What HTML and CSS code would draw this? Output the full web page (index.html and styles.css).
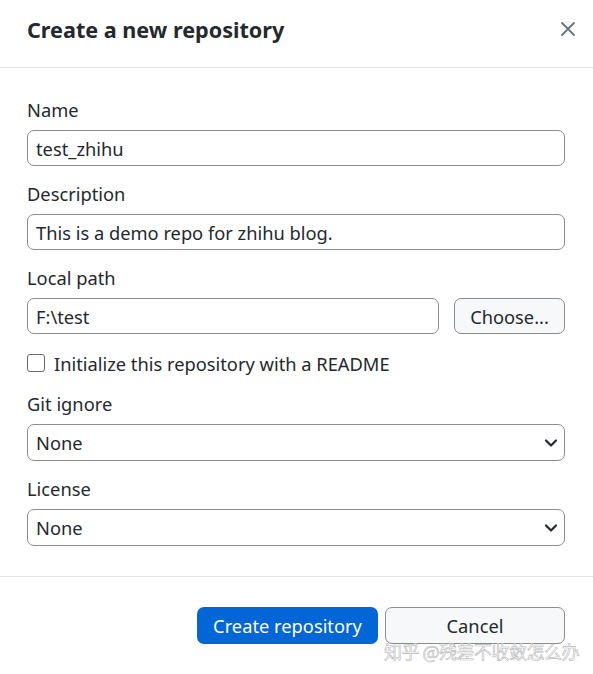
FILE: index.html
```html
<!DOCTYPE html>
<html lang="en">
<head>
<meta charset="utf-8">
<title>Create a new repository</title>
<link rel="stylesheet" href="styles.css">
</head>
<body>
<div class="dialog">
  <header class="header">
    <h1 class="title">Create a new repository</h1>
    <button class="close" aria-label="Close">
      <svg width="16" height="16" viewBox="0 0 16 16"><path d="M2 2 L14 14 M14 2 L2 14" stroke="#6a737d" stroke-width="1.8" fill="none" stroke-linecap="round"/></svg>
    </button>
  </header>
  <form class="form">
    <div class="group">
      <label class="label">Name</label>
      <div class="input">test_zhihu</div>
    </div>
    <div class="group">
      <label class="label">Description</label>
      <div class="input">This is a demo repo for zhihu blog.</div>
    </div>
    <div class="group">
      <label class="label">Local path</label>
      <div class="path-row">
        <div class="input grow">F:\test</div>
        <div class="btn choose">Choose...</div>
      </div>
    </div>
    <div class="check-row">
      <span class="checkbox"></span>
      <span class="check-label">Initialize this repository with a README</span>
    </div>
    <div class="group">
      <label class="label">Git ignore</label>
      <div class="input select"><span>None</span>
        <svg class="chev" width="14" height="10" viewBox="0 0 14 10"><path d="M2 2.5 L7 7.5 L12 2.5" stroke="#24292e" stroke-width="2.2" fill="none" stroke-linecap="round" stroke-linejoin="round"/></svg>
      </div>
    </div>
    <div class="group">
      <label class="label">License</label>
      <div class="input select"><span>None</span>
        <svg class="chev" width="14" height="10" viewBox="0 0 14 10"><path d="M2 2.5 L7 7.5 L12 2.5" stroke="#24292e" stroke-width="2.2" fill="none" stroke-linecap="round" stroke-linejoin="round"/></svg>
      </div>
    </div>
  </form>
  <footer class="footer">
    <div class="btn primary">Create repository</div>
    <div class="btn cancel">Cancel</div>
  </footer>
  <div class="watermark">知乎 @残差不收敛怎么办</div>
</div>
</body>
</html>
```
FILE: styles.css
```css
* { box-sizing: border-box; }
html, body { margin: 0; padding: 0; background: #fff; }
body {
  font-family: "Noto Sans", "Open Sans", "Noto Sans CJK SC", sans-serif;
  color: #24292e;
  width: 593px;
  height: 674px;
  overflow: hidden;
}
.dialog { position: relative; height: 674px; }
.header {
  height: 68px;
  border-bottom: 1px solid #e1e4e8;
  display: flex;
  align-items: center;
  justify-content: space-between;
  padding: 0 18px 9px 27px;
}
.title {
  margin: 0;
  font-size: 21.6px;
  font-weight: 700;
  color: #24292e;
}
.close {
  border: 0;
  background: none;
  padding: 0;
  width: 16px;
  height: 16px;
  display: flex;
  margin-right: -1px;
}
.form {
  padding: 30px 28px 30px 27px;
  display: flex;
  flex-direction: column;
  gap: 16px;
  border-bottom: 1px solid #e1e4e8;
}
.group { display: flex; flex-direction: column; gap: 8px; }
.label { font-size: 18.3px; line-height: 24px; height: 24px; }
.input {
  height: 36px;
  border: 1px solid #8c8c8c;
  border-radius: 7px;
  padding: 0 8px;
  font-size: 18.3px;
  display: flex;
  align-items: center;
  color: #24292e;
  background: #fff;
}
.path-row { display: flex; gap: 15px; }
.grow { flex: 1; }
.btn {
  height: 37px;
  border-radius: 7px;
  display: flex;
  align-items: center;
  justify-content: center;
  font-size: 18.3px;
}
.choose {
  width: 111px;
  height: 36px;
  background: #f6f8fa;
  border: 1px solid #8c8c8c;
}
.check-row {
  display: flex;
  align-items: center;
  gap: 9px;
  height: 26px;
}
.checkbox {
  width: 18px;
  height: 18px;
  border: 1.5px solid #6a6a6a;
  border-radius: 3px;
}
.check-label { font-size: 18.3px; }
.select { justify-content: space-between; padding-right: 6px; height: 37px; }
.footer {
  display: flex;
  justify-content: flex-end;
  gap: 7px;
  padding: 30px 28px 0 0;
}
.primary {
  width: 181px;
  background: #0366d6;
  color: #fff;
}
.cancel {
  width: 180px;
  background: #f6f8fa;
  border: 1px solid #8c8c8c;
  color: #24292e;
}
.watermark {
  position: absolute;
  left: 384px;
  top: 638px;
  font-family: "Noto Sans CJK SC", sans-serif;
  font-size: 18px;
  color: #fff;
  -webkit-text-stroke: 0.6px #b8b8b8;
  letter-spacing: -0.5px;
}
```
